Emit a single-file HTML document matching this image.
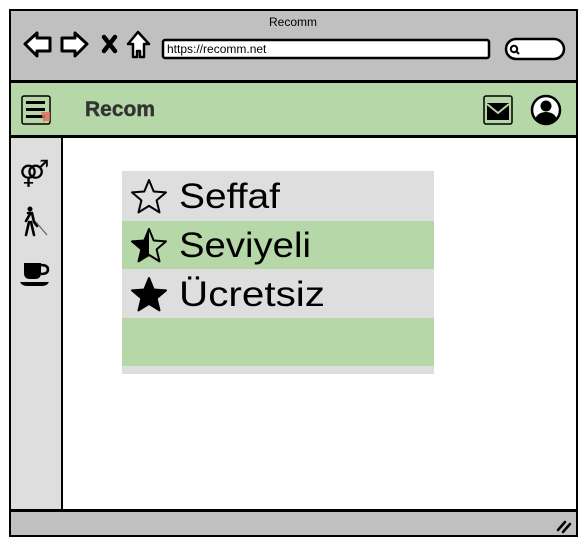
<!DOCTYPE html>
<html><head><meta charset="utf-8"><style>
html,body{margin:0;padding:0;background:#fff;width:588px;height:550px;overflow:hidden;font-family:"Liberation Sans",sans-serif}
svg{position:absolute;left:0;top:0}
</style></head><body>
<svg width="588" height="550" viewBox="0 0 588 550">
<rect x="10" y="10" width="567" height="71" fill="#c0c0c0" stroke="#000" stroke-width="2"/>
<text x="293" y="26" font-size="12" text-anchor="middle" fill="#000">Recomm</text>
<path d="M25 44 L37 33 L37 38 L50 38 L50 51 L37 51 L37 56 Z" fill="#fff" stroke="#000" stroke-width="3" stroke-linejoin="round"/>
<path d="M87 44 L75 33 L75 38 L62 38 L62 51 L75 51 L75 56 Z" fill="#fff" stroke="#000" stroke-width="3" stroke-linejoin="round"/>
<path d="M104 37 L115 51 M115 37 L104 51" stroke="#000" stroke-width="4.5" stroke-linecap="round"/>
<path d="M138 32 L128 44 L133 44 L133 57 L137 57 L137 51 L140 51 L140 57 L144 57 L144 44 L149 44 Z" fill="#fff" stroke="#000" stroke-width="2.5" stroke-linejoin="round"/>
<rect x="163" y="40" width="326" height="18" rx="2" fill="#fff" stroke="#000" stroke-width="2.5"/>
<text x="167" y="53" font-size="12" fill="#000">https://recomm.net</text>
<rect x="506" y="39" width="58" height="20" rx="10" fill="#fff" stroke="#000" stroke-width="2.5"/>
<circle cx="514" cy="49" r="3.2" fill="none" stroke="#000" stroke-width="2"/>
<line x1="516" y1="51" x2="519" y2="54" stroke="#000" stroke-width="2"/>
<rect x="10" y="82" width="567" height="54" fill="#b6d7a8" stroke="#000" stroke-width="2"/>
<rect x="22" y="96" width="28" height="28" rx="2" fill="#b6d7a8" stroke="#000" stroke-width="1.5"/>
<rect x="26" y="101" width="19" height="3" fill="#000"/>
<rect x="26" y="108" width="19" height="3" fill="#000"/>
<rect x="26" y="115" width="19" height="3" fill="#000"/>
<path d="M41 112 L50 112 L50 121 L44 121 L44 124 Z" fill="#e07060" opacity="0.85"/>
<text x="85" y="116" font-size="21" font-weight="bold" fill="#333" stroke="#333" stroke-width="0.4">Recom</text>
<rect x="484" y="96" width="28" height="28" rx="2" fill="#b6d7a8" stroke="#000" stroke-width="1.5"/>
<rect x="487" y="103" width="22" height="17" fill="#000"/>
<path d="M487 104 L498 113 L509 104" fill="none" stroke="#b6d7a8" stroke-width="2"/>
<circle cx="546" cy="110" r="14" fill="#fff" stroke="#000" stroke-width="2.5"/>
<circle cx="546" cy="106" r="5.5" fill="#000"/>
<path d="M535 119 Q538 112 546 112 Q554 112 557 119 Q552 124 546 124 Q540 124 535 119 Z" fill="#000"/>
<rect x="10" y="137" width="567" height="373" fill="#fff" stroke="#000" stroke-width="2"/>
<rect x="10" y="137" width="52" height="373" fill="#dedede" stroke="#000" stroke-width="2"/>
<text x="19" y="182" font-size="26" fill="#000">⚤</text>
<circle cx="30" cy="209" r="2.5" fill="#000"/>
<path d="M28 213 L32 213 L34 222 L37 226 M30 214 L26 221 M29 222 L26 235 M31 222 L34 235" fill="none" stroke="#000" stroke-width="2.6" stroke-linecap="round"/>
<line x1="35" y1="221" x2="47" y2="235" stroke="#555" stroke-width="1"/>
<!-- coffee cup -->
<path d="M24 263 L41 263 L41 273 Q41 279 35 279 L30 279 Q24 279 24 273 Z" fill="#000"/>
<path d="M41 265 Q48 265 48 269.5 Q48 274 41 274" fill="none" stroke="#000" stroke-width="2.5"/>
<path d="M20 282 L49 282 Q47 286 42 286 L27 286 Q22 286 20 282 Z" fill="#000"/>
<rect x="10" y="511" width="567" height="25" fill="#c0c0c0" stroke="#000" stroke-width="2"/>
<path d="M558 530 L565 522 M563 532 L570 524" stroke="#000" stroke-width="2.5" stroke-linecap="round"/>
<rect x="122" y="171" width="312" height="203" fill="#dedede"/>
<rect x="122" y="221" width="312" height="48" fill="#b6d7a8"/>
<rect x="122" y="318" width="312" height="48" fill="#b6d7a8"/>
<g font-family="Liberation Sans, DejaVu Sans, sans-serif" font-size="35" fill="#000">
<text x="179" y="208" textLength="101" lengthAdjust="spacingAndGlyphs">Seffaf</text>
<text x="179" y="257" textLength="132" lengthAdjust="spacingAndGlyphs">Seviyeli</text>
<text x="179" y="306" textLength="146" lengthAdjust="spacingAndGlyphs">Ücretsiz</text>
</g>
<path d="M149 180 L153.7 191.5 L166 192.4 L156.6 200.4 L159.5 212.4 L149 205.9 L138.5 212.4 L141.4 200.4 L132 192.4 L144.3 191.5 Z" fill="none" stroke="#000" stroke-width="2" stroke-linejoin="round"/>
<g transform="translate(0,49)">
<path d="M149 180 L153.7 191.5 L166 192.4 L156.6 200.4 L159.5 212.4 L149 205.9 L138.5 212.4 L141.4 200.4 L132 192.4 L144.3 191.5 Z" fill="none" stroke="#000" stroke-width="2" stroke-linejoin="round"/>
<path d="M149 180 L149 205.9 L138.5 212.4 L141.4 200.4 L132 192.4 L144.3 191.5 Z" fill="#000"/>
</g>
<g transform="translate(0,98)">
<path d="M149 180 L153.7 191.5 L166 192.4 L156.6 200.4 L159.5 212.4 L149 205.9 L138.5 212.4 L141.4 200.4 L132 192.4 L144.3 191.5 Z" fill="#000" stroke="#000" stroke-width="2" stroke-linejoin="round"/>
</g>
</svg>
</body></html>
